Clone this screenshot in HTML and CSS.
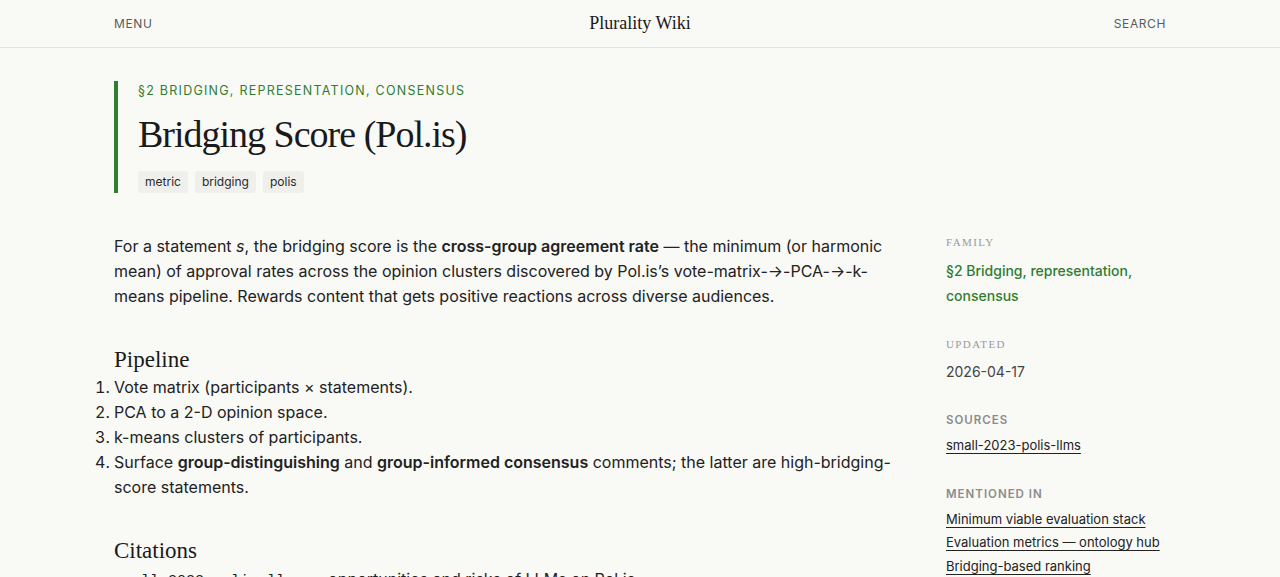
FILE: index.html
```html
<!DOCTYPE html>
<html lang="en">
<head>
    <meta charset="UTF-8">
    <meta name="viewport" content="width=device-width, initial-scale=1.0">
    <title>Bridging Score (Pol.is) · Plurality Wiki</title>
    <link rel="stylesheet" href="styles.css">
</head>
<body>
    <header class="topbar">
        <a class="topbar-link" href="#">Menu</a>
        <a class="brand" href="#">Plurality Wiki</a>
        <a class="topbar-link topbar-right" href="#">Search</a>
    </header>

    <main class="page">
        <div class="hero">
            <div class="eyebrow">§2 Bridging, representation, consensus</div>
            <h1 class="title">Bridging Score (Pol.is)</h1>
            <div class="tags">
                <span class="tag">metric</span>
                <span class="tag">bridging</span>
                <span class="tag">polis</span>
            </div>
        </div>

        <div class="layout">
            <article class="article">
                <p>For a statement <em>s</em>, the bridging score is the <strong>cross-group agreement rate</strong> — the minimum (or harmonic mean) of approval rates across the opinion clusters discovered by Pol.is’s vote-matrix-→-PCA-→-k-means pipeline. Rewards content that gets positive reactions across diverse audiences.</p>

                <h2>Pipeline</h2>
                <ol>
                    <li>Vote matrix (participants × statements).</li>
                    <li>PCA to a 2-D opinion space.</li>
                    <li>k-means clusters of participants.</li>
                    <li>Surface <strong>group-distinguishing</strong> and <strong>group-informed consensus</strong> comments; the latter are high-bridging-score statements.</li>
                </ol>

                <h2>Citations</h2>
                <ul class="cites">
                    <li><code>small-2023-polis-llms</code> — opportunities and risks of LLMs on Pol.is</li>
                </ul>
            </article>

            <aside class="meta">
                <div class="meta-block">
                    <div class="meta-label">Family</div>
                    <div class="meta-family">§2 Bridging, representation, consensus</div>
                </div>
                <div class="meta-block">
                    <div class="meta-label">Updated</div>
                    <div class="meta-value">2026-04-17</div>
                </div>
                <div class="meta-block">
                    <div class="meta-heading">Sources</div>
                    <a class="meta-link" href="#">small-2023-polis-llms</a>
                </div>
                <div class="meta-block">
                    <div class="meta-heading">Mentioned in</div>
                    <a class="meta-link" href="#">Minimum viable evaluation stack</a>
                    <a class="meta-link" href="#">Evaluation metrics — ontology hub</a>
                    <a class="meta-link" href="#">Bridging-based ranking</a>
                </div>
            </aside>
        </div>
    </main>
</body>
</html>
```

FILE: styles.css
```css
* {
    margin: 0;
    padding: 0;
    box-sizing: border-box;
}
body {
    background-color: #f9f9f6;
    color: #1f1f1f;
    font-family: Inter, "Noto Sans", sans-serif;
}
a {
    color: inherit;
    text-decoration: none;
}
strong {
    font-weight: 600;
}

/* top bar */
.topbar {
    height: 48px;
    padding: 0 114px;
    display: grid;
    grid-template-columns: 1fr auto 1fr;
    align-items: center;
    border-bottom: 1px solid #e2e2de;
}
.topbar-link {
    font-size: 12px;
    letter-spacing: 0.6px;
    text-transform: uppercase;
    color: #5a5a5a;
}
.topbar-right {
    justify-self: end;
}
.brand {
    font-family: "Liberation Serif", serif;
    font-size: 18px;
    color: #1a1a1a;
}

.page {
    padding: 33px 114px 0;
}

/* title block */
.hero {
    border-left: 4px solid #2e7d32;
    padding-left: 20px;
    height: 112px;
    padding-top: 2px;
}
.eyebrow {
    font-size: 12.5px;
    letter-spacing: 1.25px;
    text-transform: uppercase;
    color: #2e7d32;
    line-height: 16px;
}
.title {
    font-family: "Liberation Serif", serif;
    font-weight: normal;
    font-size: 38px;
    letter-spacing: -1px;
    line-height: 48px;
    margin-top: 11px;
    color: #1a1a1a;
}
.tags {
    display: flex;
    gap: 7px;
    margin-top: 13px;
}
.tag {
    background-color: #efefec;
    border-radius: 3px;
    font-size: 12px;
    line-height: 22px;
    padding: 0 7px;
    color: #2a2a2a;
}

/* body + sidebar */
.layout {
    display: grid;
    grid-template-columns: 1fr 220px;
    gap: 48px;
    margin-top: 41px;
}
.article p {
    font-size: 16px;
    line-height: 25px;
    color: #222;
}
.article h2 {
    font-family: "Liberation Serif", serif;
    font-weight: normal;
    font-size: 23px;
    line-height: 30px;
    margin-top: 36px;
    color: #1a1a1a;
}
.article ol {
    list-style-position: outside;
    font-size: 16px;
    line-height: 25px;
    color: #222;
}
.cites {
    list-style: none;
    font-size: 16px;
    line-height: 25px;
    margin-top: 1px;
}
.cites code {
    font-family: "Liberation Mono", monospace;
    font-size: 15px;
}

.meta-block {
    margin-bottom: 28px;
}
.meta-label {
    font-family: "Liberation Serif", serif;
    font-size: 11px;
    letter-spacing: 1.4px;
    text-transform: uppercase;
    color: #9a9a9a;
    line-height: 16px;
    margin-bottom: 8px;
}
.meta-family {
    font-size: 14px;
    font-weight: 500;
    line-height: 25px;
    color: #2e7d32;
}
.meta-value {
    font-size: 14px;
    line-height: 24px;
    color: #444;
}
.meta-heading {
    font-size: 11.5px;
    font-weight: 600;
    letter-spacing: 1px;
    text-transform: uppercase;
    color: #8c8c8c;
    line-height: 16px;
    margin-bottom: 6px;
}
.meta-link {
    display: block;
    font-size: 13px;
    line-height: 23.5px;
    color: #222;
    text-decoration: underline;
    text-underline-offset: 3px;
}
```
